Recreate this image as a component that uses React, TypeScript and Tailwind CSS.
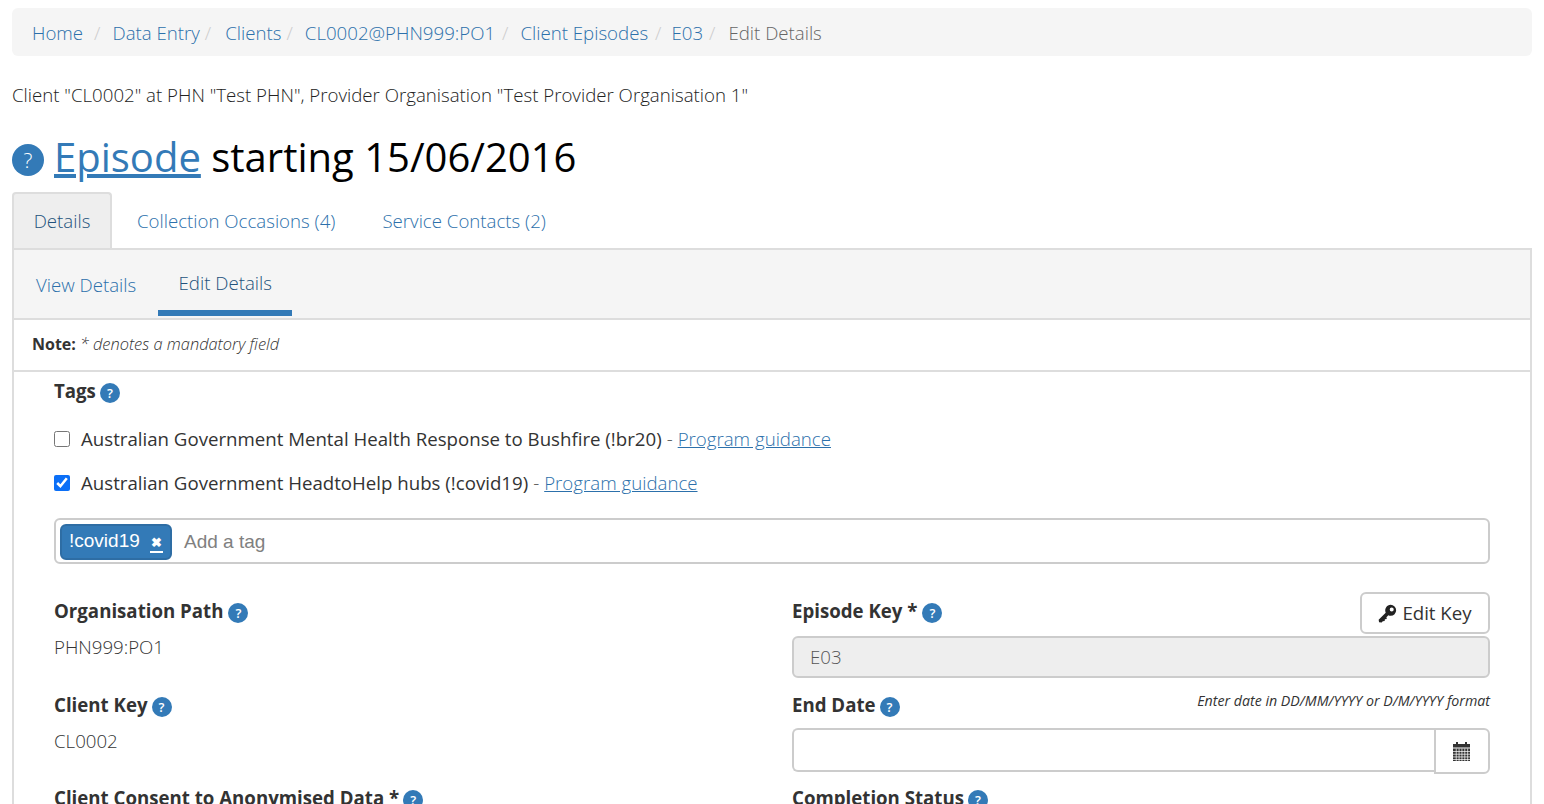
const Help = ({ big }: { big?: boolean }) =>
  big ? (
    <span className="mt-[6px] inline-flex h-8 w-8 shrink-0 items-center justify-center rounded-full bg-[#337ab7] text-[21px] font-light leading-none text-white">
      ?
    </span>
  ) : (
    <span className="mt-[4px] inline-flex h-5 w-5 shrink-0 items-center justify-center rounded-full bg-[#337ab7] text-[13px] font-semibold leading-none text-white">
      ?
    </span>
  );

const KeyIcon = () => (
  <svg viewBox="0 0 18 18" className="h-[19px] w-[19px] text-[#222]" fill="currentColor">
    <path
      fillRule="evenodd"
      d="M12 .8a5.2 5.2 0 0 1 0 10.4c-.8 0-1.5-.2-2.2-.5L8 12.5l.3 1.6-1.8.3-.2 1.8-1.8.2-1 1.2-2.5-.4L.6 15l6.7-6.8A5.2 5.2 0 0 1 12 .8Zm1 2.4a1.9 1.9 0 1 0 0 3.8 1.9 1.9 0 0 0 0-3.8Z"
    />
  </svg>
);

const CalendarIcon = () => (
  <svg viewBox="0 0 17 19" className="h-[19px] w-[17px] text-[#333]" fill="currentColor">
    <rect x="3" y="0" width="2" height="2.5" />
    <rect x="12" y="0" width="2" height="2.5" />
    <rect x="0" y="2" width="17" height="3.5" />
    <rect x="0" y="6.5" width="17" height="12.5" />
    {[2.8, 5.7, 8.6, 11.5, 14.4].map((x) => (
      <rect key={x} x={x} y="6.5" width="0.7" height="12.5" fill="#fff" />
    ))}
    {[9, 11.8, 14.6, 17.2].map((y) => (
      <rect key={y} x="0" y={y} width="17" height="0.7" fill="#fff" />
    ))}
  </svg>
);

const crumbs = [
  { label: "Home", gap: "ml-[11px] mr-3" },
  { label: "Data Entry", gap: "ml-[5px] mr-[14px]" },
  { label: "Clients", gap: "ml-[5px] mr-3" },
  { label: "CL0002@PHN999:PO1", gap: "ml-[7px] mr-3" },
  { label: "Client Episodes", gap: "ml-[7px] mr-[10px]" },
  { label: "E03", gap: "ml-[6px] mr-[13px]" },
];

const Label = ({ text, tight, className }: { text: string; tight?: boolean; className?: string }) => (
  <div
    className={`flex items-center ${tight ? "gap-1" : "gap-[5px]"} text-[18.667px] font-bold leading-[26px] text-[#333] ${className ?? ""}`}
  >
    <span>{text}</span>
    <Help />
  </div>
);

const TagOption = ({ text, checked }: { text: string; checked?: boolean }) => (
  <label className="flex h-[26px] items-center text-[18.667px] leading-[26px] text-[#333]">
    <input type="checkbox" defaultChecked={checked} className="ml-0 mr-[11px] h-4 w-4 accent-[#0b6ff7]" />
    <span>{text}</span>
    <span className="mx-[5px] font-light text-[#555]">-</span>
    <a href="#" className="font-light text-[#2c70ab] underline">
      Program guidance
    </a>
  </label>
);

export default function App() {
  return (
    <div className="h-[804px] overflow-hidden bg-white px-3 pt-2 font-['Open_Sans',sans-serif] text-[18.667px] font-light text-[#333]">
      <nav className="flex h-12 items-center rounded-md bg-[#f5f5f5] px-5 pt-[2px]">
        {crumbs.map((c) => (
          <span key={c.label} className="flex items-center">
            <a href="#" className="text-[#2c70ab]">
              {c.label}
            </a>
            <span className={`${c.gap} text-[#ccc]`}>/</span>
          </span>
        ))}
        <span className="text-[#666]">Edit Details</span>
      </nav>

      <p className="mt-[26px] h-[26px] leading-[26px] text-[#222]">
        Client "CL0002" at PHN "Test PHN", Provider Organisation "Test Provider Organisation 1"
      </p>

      <h1 className="mt-[21px] flex h-[56px] items-center text-[40px] font-normal leading-[56px] text-black">
        <Help big />
        <span className="ml-2.5">
          <a href="#" className="text-[#337ab7] underline">
            Episode
          </a>{" "}
          starting 15/06/2016
        </span>
      </h1>

      <div className="mt-[7px] flex h-[56px] items-stretch">
        <div className="flex w-[100px] items-center justify-center rounded-t border-2 border-b-0 border-[#ddd] bg-[#eee] text-[#23527c]">
          Details
        </div>
        <a href="#" className="ml-[25px] flex items-center pt-0.5 text-[#2c70ab]">
          Collection Occasions (4)
        </a>
        <a href="#" className="ml-[47px] flex items-center pt-0.5 text-[#2c70ab]">
          Service Contacts (2)
        </a>
      </div>

      <div className="border-2 border-b-0 border-[#ddd]">
        <div className="flex h-[70px] border-b-2 border-[#ddd] bg-[#f5f5f5] pl-[22px]">
          <a href="#" className="mt-[21px] text-[#2c70ab]">
            View Details
          </a>
          <div className="ml-[22px] flex h-[66px] w-[134px] justify-center border-b-[6px] border-[#337ab7] pt-[19px] text-[#23527c]">
            <a href="#">Edit Details</a>
          </div>
        </div>

        <div className="flex h-[52px] items-center border-b-2 border-[#ddd] pb-0.5 pl-[18px] text-[16px] font-normal text-[#333]">
          <b className="font-bold">Note:</b>
          <i className="ml-1 text-[16.4px] font-light">* denotes a mandatory field</i>
        </div>

        <div className="px-10 pt-[6px]">
          <Label text="Tags" tight />
          <div className="mt-[22px] flex flex-col gap-[18px] font-normal">
            <TagOption text="Australian Government Mental Health Response to Bushfire (!br20)" />
            <TagOption text="Australian Government HeadtoHelp hubs (!covid19)" checked />
          </div>

          <div className="mt-[22px] flex h-[46px] items-center rounded-md border-2 border-[#ccc] pl-[4px] font-['Liberation_Sans',sans-serif] text-[19px] font-normal">
            <span className="mt-px flex h-9 w-[112px] items-center rounded-md border-2 border-[#2e6da4] bg-[#337ab7] pl-[7px] text-white">
              !covid19
              <span className="ml-[10px] mt-1 border-b-2 border-white px-px text-[13px] font-bold leading-[16px]">✖</span>
            </span>
            <span className="ml-3 pt-[2px] text-[#808080]">Add a tag</span>
          </div>

          <div className="mt-[28px] grid grid-cols-[738px_1fr]">
            <div>
              <Label text="Organisation Path" className="mt-[6px]" />
              <div className="mt-[10px] h-[26px] leading-[26px]">PHN999:PO1</div>
              <Label text="Client Key" tight className="mt-[32px]" />
              <div className="mt-[10px] h-[26px] leading-[26px]">CL0002</div>
              <Label text="Client Consent to Anonymised Data *" tight className="mt-[31px]" />
            </div>
            <div>
              <div className="flex h-[42px] items-center justify-between">
                <Label text="Episode Key *" className="mt-[-4px]" />
                <button className="flex h-[42px] w-[130px] items-center justify-center gap-[5px] rounded-md border-2 border-[#ccc] font-normal text-[#333]">
                  <KeyIcon />
                  Edit Key
                </button>
              </div>
              <div className="mt-[2px] flex h-[42px] items-center rounded-md border-2 border-[#ccc] bg-[#eee] px-4 font-light text-[#555]">
                E03
              </div>
              <div className="mt-[14px] flex h-[28px] items-center justify-between">
                <Label text="End Date" tight className="mt-[-2px]" />
                <i className="mb-[10px] text-[14.2px] font-normal text-[#333]">Enter date in DD/MM/YYYY or D/M/YYYY format</i>
              </div>
              <div className="mt-[8px] flex h-[46px]">
                <div className="h-11 flex-1 rounded-l-md border-2 border-r-0 border-[#ccc]" />
                <div className="flex w-[56px] items-center justify-center rounded-r-md border-2 border-[#ccc] pr-[2px]">
                  <CalendarIcon />
                </div>
              </div>
              <Label text="Completion Status" tight className="mt-[11px]" />
            </div>
          </div>
        </div>
      </div>
    </div>
  );
}
